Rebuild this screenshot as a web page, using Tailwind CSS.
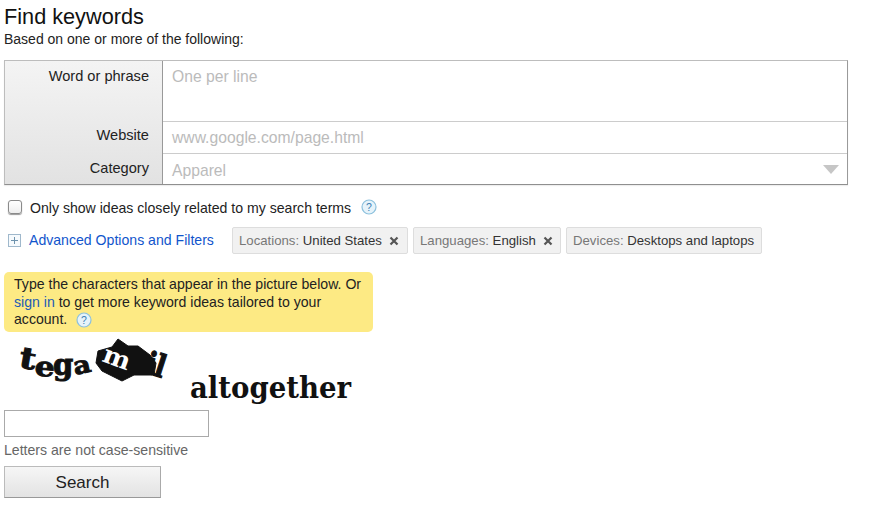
<!DOCTYPE html>
<html>
<head>
<meta charset="utf-8">
<script src="https://cdn.jsdelivr.net/npm/@tailwindcss/browser@4"></script>
</head>
<body class="bg-white font-['Liberation_Sans',Arial,sans-serif] text-[#222] w-[882px] h-[517px] overflow-hidden">
<div class="pl-1 pt-[4px]">
  <h1 class="text-[21.700px] leading-[25px] font-normal text-[#111]">Find keywords</h1>
  <p class="text-[14px] leading-[16px] mt-[2px] text-[#222]">Based on one or more of the following:</p>

  <div class="mt-[13px] w-[844px] h-[125px] flex border border-[#bdbdbd] border-r-[#9a9a9a] border-b-[#8f8f8f] shadow-[0_1px_1px_#eee] text-[14.600px]">
    <div class="w-[158px] shrink-0 border-r border-[#999] bg-gradient-to-b from-[#f4f4f4] to-[#e2e2e2] text-right pr-[13px] text-[#222]">
      <div class="h-[61px] pt-[7px] leading-[17px]">Word or phrase</div>
      <div class="h-[32px] pt-[5px] leading-[17px]">Website</div>
      <div class="h-[30px] pt-[6px] leading-[17px]">Category</div>
    </div>
    <div class="flex-1 text-[#bbb] text-[15.700px]">
      <div class="h-[61px] pl-[9px] pt-[7px] leading-[17px] border-b border-[#ccc]">One per line</div>
      <div class="h-[32px] pl-[9px] pt-[7px] leading-[17px] border-b border-[#ccc]">www.google.com/page.html</div>
      <div class="h-[30px] pl-[9px] pt-[8px] leading-[17px] flex justify-between pr-[8px]">
        <span>Apparel</span>
        <svg class="mt-[3px]" width="16" height="9" viewBox="0 0 16 9"><path d="M0 0H16L8 9Z" fill="#c6c6c6"/></svg>
      </div>
    </div>
  </div>

  <div class="mt-[14px] flex items-center h-[16px] text-[14.100px] leading-[18px] text-[#222]">
    <span class="ml-[4px] w-[14px] h-[14px] rounded-[3px] border border-[#8a8a8a] bg-gradient-to-b from-white to-[#eee] shadow-[0_1px_1px_#999]"></span>
    <span class="ml-[8px] translate-y-[1px]">Only show ideas closely related to my search terms</span>
    <svg class="ml-[10px]" width="16" height="16" viewBox="0 0 16 16"><circle cx="8" cy="8" r="7" fill="#e6f3fa" stroke="#8cc0dd" stroke-width="1.2"/><text x="8" y="11.8" text-anchor="middle" font-size="10.5" font-family="Liberation Sans" fill="#3a80b5">?</text></svg>
  </div>

  <div class="mt-[12px] flex items-center h-[27px]">
    <svg class="ml-[4px]" width="13" height="13" viewBox="0 0 13 13"><rect x="0.5" y="0.5" width="12" height="12" fill="#f6fafd" stroke="#9fb8cc"/><path d="M3 6.5H10M6.5 3V10" stroke="#6f93ad"/></svg>
    <span class="ml-[8px] w-[203px] text-[14.100px] text-[#1155cc]">Advanced Options and Filters</span>
    <div class="flex gap-[5px] text-[13.200px] text-[#333]">
      <div class="w-[176px] h-[27px] flex items-center pl-[6px] rounded-[2px] border border-[#ddd] bg-[#f1f1f1]"><span class="text-[#777]">Locations:&nbsp;</span>United States
        <svg class="ml-[7px]" width="10" height="10" viewBox="0 0 10 10"><path d="M1.5 1.5L8.500 8.500M8.500 1.500L1.500 8.500" stroke="#555" stroke-width="2.200"/></svg></div>
      <div class="w-[148px] h-[27px] flex items-center pl-[6px] rounded-[2px] border border-[#ddd] bg-[#f1f1f1]"><span class="text-[#777]">Languages:&nbsp;</span>English
        <svg class="ml-[7px]" width="10" height="10" viewBox="0 0 10 10"><path d="M1.5 1.5L8.500 8.500M8.500 1.500L1.500 8.500" stroke="#555" stroke-width="2.200"/></svg></div>
      <div class="w-[196px] h-[27px] flex items-center pl-[6px] rounded-[2px] border border-[#ddd] bg-[#f1f1f1]"><span class="text-[#777]">Devices:&nbsp;</span>Desktops and laptops</div>
    </div>
  </div>

  <div class="mt-[18px] w-[369px] h-[60px] rounded-[5px] bg-[#fdea84] pl-[10px] pr-[4px] pt-[4px] text-[14.100px] leading-[17.500px] text-[#222]">
    <p>Type the characters that appear in the picture below. Or</p>
    <p><span class="text-[#1c5bb5]">sign in</span> to get more keyword ideas tailored to your</p>
    <p class="flex items-center">account.
      <svg class="ml-[9px]" width="16" height="16" viewBox="0 0 16 16"><circle cx="8" cy="8" r="7" fill="#e6f3fa" stroke="#8cc0dd" stroke-width="1.2"/><text x="8" y="11.800" text-anchor="middle" font-size="10.500" font-family="Liberation Sans" fill="#3a80b5">?</text></svg></p>
  </div>

  <svg class="block mt-[5px]" width="360" height="73" viewBox="0 0 360 73">
    <g font-family="DejaVu Serif" font-weight="bold" fill="#111" stroke="#111" stroke-width="1">
      <text transform="translate(14 30) rotate(10) scale(1.150 .95)" font-size="31">t</text>
      <text transform="translate(30 38) rotate(6) scale(1.050 .9)" font-size="30">e</text>
      <text transform="translate(49 38) rotate(0) scale(1 1)" font-size="29">g</text>
      <text transform="translate(71 38) rotate(-12) scale(1 .9)" font-size="27">a</text>
      <path d="M92 26L94 14 108 10 114 2 124 9 134 9 146 18 152 26 150 38 130 38 118 44 98 34Z"/>
      <text transform="translate(139 35) rotate(18) scale(1 1.200)" font-size="26">il</text>
    </g>
    <g font-family="DejaVu Serif" font-weight="bold" fill="#fff">
      <text transform="translate(97 24) rotate(20) scale(1.050 1)" font-size="25">m</text>
    </g>
    <text x="186" y="61" font-family="DejaVu Serif" font-weight="bold" font-size="29" textLength="161" lengthAdjust="spacingAndGlyphs" fill="#111">altogether</text>
  </svg>

  <div class="w-[205px] h-[27px] border border-[#aaa] bg-white"></div>
  <p class="mt-[5px] text-[14.100px] leading-[16px] text-[#666]">Letters are not case-sensitive</p>
  <button class="block mt-[8px] w-[157px] h-[32px] border border-[#bbb] border-b-[#999] border-r-[#aaa] bg-gradient-to-b from-[#f6f6f6] to-[#e3e3e3] text-[17px] leading-[32px] text-[#222] text-center">Search</button>
</div>
</body>
</html>
